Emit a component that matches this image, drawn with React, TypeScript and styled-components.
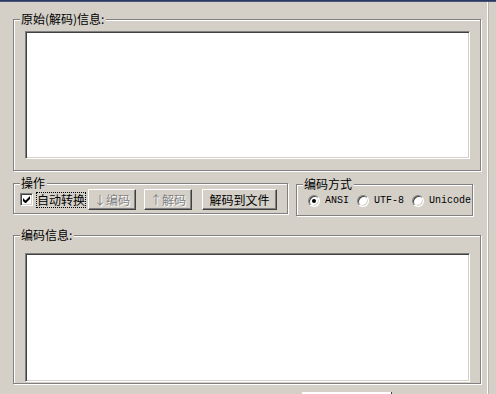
import styled, { createGlobalStyle } from "styled-components";

const GlobalStyle = createGlobalStyle`
  html, body {
    margin: 0;
    padding: 0;
    background: #d4d0c8;
  }
  body {
    font-family: "Noto Sans CJK SC", "Liberation Sans", sans-serif;
    font-size: 12px;
    color: #000;
  }
`;

const Screen = styled.div`
  display: flex;
  flex-direction: column;
  width: 496px;
  height: 394px;
  overflow: hidden;
  background: #d4d0c8;
`;

const TitleEdge = styled.div`
  flex: none;
  height: 2px;
  background: linear-gradient(#1b2a5a, #56617f);
`;

const Frame = styled.div`
  display: flex;
  flex: 1;
`;

const Body = styled.div`
  display: flex;
  flex-direction: column;
  width: 474px;
  padding-left: 13px;
  border-right: 1px solid #ffffff;
  box-shadow: 1px 0 0 #b8b4ac;
`;

const Group = styled.div<{ $w: number; $h: number; $top: number; $left?: number }>`
  position: relative;
  box-sizing: border-box;
  flex: none;
  width: ${(p) => p.$w}px;
  height: ${(p) => p.$h}px;
  margin-top: ${(p) => p.$top}px;
  margin-left: ${(p) => p.$left ?? 0}px;
  border: 1px solid #808080;
  box-shadow: inset 1px 1px 0 #ffffff, 1px 1px 0 #ffffff;
`;

const Legend = styled.span`
  position: absolute;
  top: -8px;
  left: 6px;
  padding: 0 2px 0 1px;
  line-height: 14px;
  background: #d4d0c8;
  white-space: nowrap;
`;

const Inner = styled.div<{ $pt: number; $pl: number }>`
  display: flex;
  align-items: center;
  padding: ${(p) => p.$pt}px 0 0 ${(p) => p.$pl}px;
`;

const TextBox = styled.div<{ $h: number }>`
  box-sizing: border-box;
  width: 445px;
  height: ${(p) => p.$h}px;
  background: #ffffff;
  border-top: 1px solid #808080;
  border-left: 1px solid #808080;
  border-right: 1px solid #ffffff;
  border-bottom: 1px solid #ffffff;
  box-shadow: inset 1px 1px 0 #404040, inset -1px -1px 0 #d4d0c8;
`;

const Row = styled.div`
  display: flex;
  align-items: flex-start;
`;

const CheckBox = styled.span`
  box-sizing: border-box;
  display: flex;
  align-items: center;
  justify-content: center;
  width: 13px;
  height: 13px;
  background: #ffffff;
  border-top: 1px solid #808080;
  border-left: 1px solid #808080;
  border-right: 1px solid #ffffff;
  border-bottom: 1px solid #ffffff;
  box-shadow: inset 1px 1px 0 #404040, inset -1px -1px 0 #d4d0c8;
`;

const FocusLabel = styled.span`
  margin-left: 3px;
  padding: 1px 1px;
  line-height: 14px;
  outline: 1px dotted #000;
  outline-offset: -1px;
`;

const Button = styled.button<{ $w: number; $ml: number }>`
  box-sizing: border-box;
  width: ${(p) => p.$w}px;
  height: 21px;
  margin: 0 0 0 ${(p) => p.$ml}px;
  padding: 0;
  font-family: "Noto Sans CJK SC", sans-serif;
  font-size: 12px;
  line-height: 14px;
  color: ${(p) => (p.disabled ? "#808080" : "#000")};
  text-shadow: ${(p) => (p.disabled ? "1px 1px 0 #ffffff" : "none")};
  background: #d4d0c8;
  border-top: 1px solid #ffffff;
  border-left: 1px solid #ffffff;
  border-right: 1px solid #404040;
  border-bottom: 1px solid #404040;
  box-shadow: inset -1px -1px 0 #808080;
`;

const Radio = styled.span<{ $on?: boolean; $ml: number }>`
  box-sizing: border-box;
  display: flex;
  align-items: center;
  justify-content: center;
  width: 12px;
  height: 12px;
  margin-left: ${(p) => p.$ml}px;
  border-radius: 50%;
  background: #ffffff;
  border: 1px solid;
  border-color: #808080 #ffffff #ffffff #808080;
  box-shadow: inset 1px 1px 0 #404040, inset -1px -1px 0 #d4d0c8;
  &::after {
    content: "";
    display: ${(p) => (p.$on ? "block" : "none")};
    width: 4px;
    height: 4px;
    border-radius: 50%;
    background: #000;
  }
`;

const RadioText = styled.span`
  margin-left: 5px;
  font-family: "Liberation Mono", monospace;
  font-size: 10px;
  line-height: 12px;
`;

const Stub = styled.div`
  flex: none;
  width: 89px;
  height: 3px;
  margin: 8px 0 0 289px;
  background: #ffffff;
  border-right: 1px solid #404040;
`;

export default function App() {
  return (
    <Screen>
      <GlobalStyle />
      <TitleEdge />
      <Frame>
        <Body>
          <Group $w={468} $h={152} $top={17}>
            <Legend>原始(解码)信息:</Legend>
            <Inner $pt={11} $pl={11}>
              <TextBox $h={128} />
            </Inner>
          </Group>

          <Row>
            <Group $w={275} $h={31} $top={12}>
              <Legend>操作</Legend>
              <Inner $pt={5} $pl={6}>
                <CheckBox>
                  <svg width="7" height="7" viewBox="0 0 7 7">
                    <path d="M0 2v3l2 2h1l4-4V0L2.5 4.5z" fill="#000" />
                  </svg>
                </CheckBox>
                <FocusLabel>自动转换</FocusLabel>
                <Button $w={48} $ml={2} disabled>
                  ↓编码
                </Button>
                <Button $w={48} $ml={8} disabled>
                  ↑解码
                </Button>
                <Button $w={75} $ml={10}>
                  解码到文件
                </Button>
              </Inner>
            </Group>
            <Group $w={177} $h={32} $top={13} $left={8}>
              <Legend>编码方式</Legend>
              <Inner $pt={10} $pl={11}>
                <Radio $on $ml={0} />
                <RadioText>ANSI</RadioText>
                <Radio $ml={8} />
                <RadioText>UTF-8</RadioText>
                <Radio $ml={8} />
                <RadioText>Unicode</RadioText>
              </Inner>
            </Group>
          </Row>

          <Group $w={468} $h={149} $top={19}>
            <Legend>编码信息:</Legend>
            <Inner $pt={17} $pl={11}>
              <TextBox $h={129} />
            </Inner>
          </Group>

          <Stub />
        </Body>
      </Frame>
    </Screen>
  );
}
